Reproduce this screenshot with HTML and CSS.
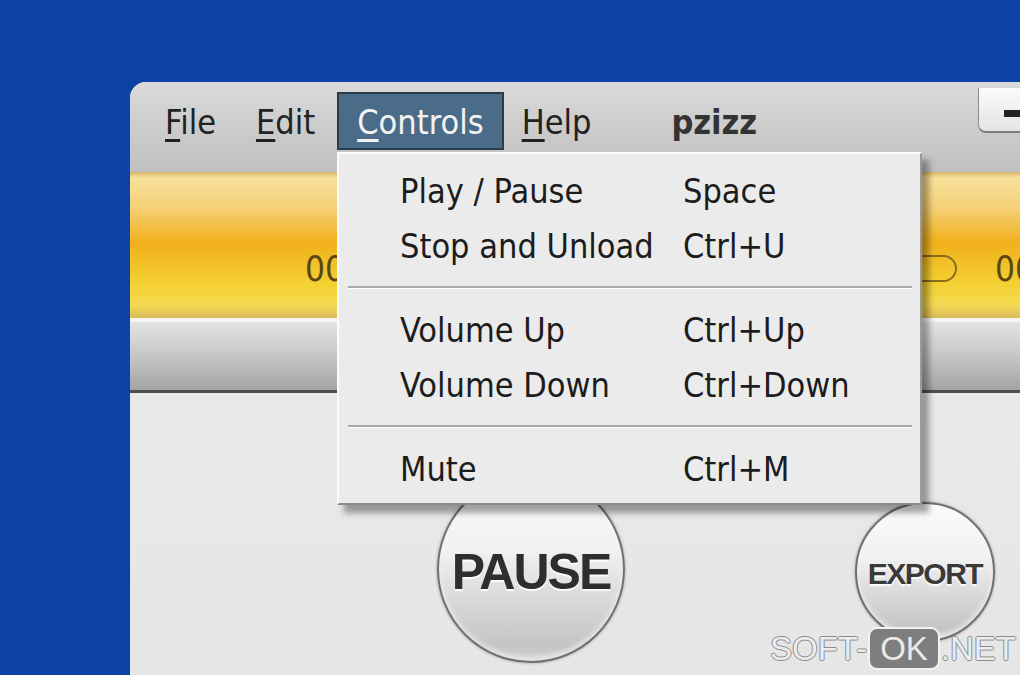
FILE: index.html
```html
<!DOCTYPE html>
<html>
<head>
<meta charset="utf-8">
<title>pzizz</title>
<link rel="stylesheet" href="styles.css">
</head>
<body>
<div class="desktop">
  <div class="window">
    <div class="menubar">
      <span class="mi"><u>F</u>ile</span>
      <span class="mi"><u>E</u>dit</span>
      <span class="mi active"><u>C</u>ontrols</span>
      <span class="mi"><u>H</u>elp</span>
      <span class="title">pzizz</span>
      <div class="minbtn"><span class="dash"></span></div>
    </div>
    <div class="timebar">
      <span class="t1">00:00:00</span>
      <span class="pill"></span>
      <span class="t2">00:00:00</span>
    </div>
    <div class="graybar"></div>
    <div class="content">
      <div class="btn pause">PAUSE</div>
      <div class="btn export">EXPORT</div>
    </div>

    <div class="dropdown">
      <div class="row"><span class="lbl">Play / Pause</span><span class="key">Space</span></div>
      <div class="row"><span class="lbl">Stop and Unload</span><span class="key">Ctrl+U</span></div>
      <div class="sep"></div>
      <div class="row"><span class="lbl">Volume Up</span><span class="key">Ctrl+Up</span></div>
      <div class="row"><span class="lbl">Volume Down</span><span class="key">Ctrl+Down</span></div>
      <div class="sep"></div>
      <div class="row"><span class="lbl">Mute</span><span class="key">Ctrl+M</span></div>
    </div>
  </div>
</div>
<div class="wm"><span>SOFT-</span><span class="ok">OK</span><span>.NET</span></div>
</body>
</html>
```
FILE: styles.css
```css
html, body {
  margin: 0;
  padding: 0;
}
body {
  position: relative;
  width: 1020px;
  height: 675px;
  overflow: hidden;
  background: #0b42a3;
  font-family: "DejaVu Sans Condensed", "DejaVu Sans", sans-serif;
  font-stretch: condensed;
}
.desktop {
  padding: 82px 0 0 130px;
  height: 593px;
}
.window {
  position: relative;
  width: 890px;
  height: 593px;
  border-top-left-radius: 16px;
  overflow: hidden;
  background: linear-gradient(#ebebeb, #e6e6e6);
  display: flex;
  flex-direction: column;
}

/* menu bar */
.menubar {
  height: 90px;
  flex-shrink: 0;
  box-sizing: border-box;
  display: flex;
  align-items: flex-start;
  padding: 10px 0 0 15px;
  background: linear-gradient(#dadada, #cbcbcb 55%, #c0c0c0);
  font-size: 34px;
  color: #222;
}
.mi {
  height: 52px;
  line-height: 52px;
  padding: 2px 18px 0;
  border: 2px solid transparent;
  white-space: nowrap;
}
.mi u {
  text-decoration-thickness: 3px;
  text-underline-offset: 5px;
}
.mi.active {
  margin-left: 2px;
  margin-right: -2px;
  background: #4a6c88;
  border-color: #2a3b4b;
  color: #f3f3f3;
}
.title {
  font-weight: bold;
  margin-left: 60px;
  height: 52px;
  line-height: 52px;
  padding-top: 4px;
  color: #333;
  font-stretch: normal;
}
.minbtn {
  margin-left: auto;
  margin-top: -4px;
  width: 42px;
  height: 45px;
  box-sizing: border-box;
  background: linear-gradient(#fbfbfb, #e4e4e4);
  border-left: 1px solid #8c8c8c;
  border-bottom: 2px solid #7c7c7c;
  border-bottom-left-radius: 8px;
  padding: 22px 0 0 25px;
  flex-shrink: 0;
}
.dash {
  display: block;
  width: 30px;
  height: 7px;
  background: #222;
}

/* yellow time bar */
.timebar {
  height: 146px;
  flex-shrink: 0;
  box-sizing: border-box;
  display: flex;
  align-items: flex-start;
  padding: 77px 0 0 175px;
  background: linear-gradient(to bottom,
    #d6b468 0, #f8e19b 4%, #f5d179 24%, #f0b01c 48%,
    #f2c228 64%, #f4d234 78%, #f3da52 91%, #e3c65c 97%, #d9bb58 100%);
  font-size: 35px;
  line-height: 40px;
  color: #5a4710;
  white-space: nowrap;
}
.t1 {
  width: 592px;
  flex-shrink: 0;
}
.pill {
  width: 60px;
  height: 27px;
  margin-top: 6px;
  margin-right: 38px;
  box-sizing: border-box;
  border: 2px solid #8b6b1e;
  border-radius: 14px;
  flex-shrink: 0;
}
.t2 {
  flex-shrink: 0;
}

/* gray bar */
.graybar {
  height: 75px;
  flex-shrink: 0;
  box-sizing: border-box;
  border-top: 4px solid #f4f4f4;
  border-bottom: 3px solid #4e4e4e;
  background: linear-gradient(#e4e4e4, #c6c6c6 50%, #a4a4a4);
}

/* buttons area */
.content {
  flex: 1;
  display: flex;
  align-items: flex-start;
  padding: 82px 0 0 307px;
}
.btn {
  flex-shrink: 0;
  box-sizing: border-box;
  border-radius: 50%;
  display: flex;
  align-items: center;
  justify-content: center;
  border: 2px solid #707070;
  background: linear-gradient(#fbfbfb 0%, #f1f1f1 40%, #dddddd 62%, #c4c4c4 92%, #d2d2d2 100%);
  box-shadow: 0 0 3px rgba(0,0,0,.35), inset 0 -4px 5px rgba(255,255,255,.5);
  font-family: "Liberation Sans", Arial, sans-serif;
  font-weight: bold;
  color: #2e2e2e;
  text-shadow: 0 2px 1px rgba(255,255,255,.9);
}
.pause {
  width: 188px;
  height: 188px;
  padding-top: 6px;
  font-size: 50px;
  letter-spacing: -2px;
}
.export {
  width: 140px;
  height: 140px;
  margin-left: 230px;
  margin-top: 27px;
  padding-top: 4px;
  font-size: 30px;
  letter-spacing: -1.5px;
  color: #3a3a3a;
}

/* dropdown menu */
.dropdown {
  position: absolute;
  left: 207px;
  top: 70px;
  width: 585px;
  height: 353px;
  box-sizing: border-box;
  background: #ebebeb;
  border: 2px solid;
  border-color: #fbfbfb #9a9a9a #8a8a8a #fbfbfb;
  box-shadow: 7px 8px 6px rgba(0,0,0,.35);
  padding: 10px 0 6px;
  font-size: 34px;
  color: #1c1c1c;
  white-space: nowrap;
}
.row {
  display: flex;
  height: 55px;
  line-height: 55px;
  padding-left: 61px;
}
.lbl {
  width: 283px;
  flex-shrink: 0;
}
.sep {
  height: 29px;
  box-sizing: border-box;
  padding: 12px 8px 0 9px;
}
.sep::before {
  content: "";
  display: block;
  height: 2px;
  background: #a9a9a9;
  border-bottom: 1px solid #ffffff;
}

/* watermark */
.wm {
  position: absolute;
  left: 770px;
  top: 627px;
  display: flex;
  align-items: center;
  font-family: "Liberation Sans", Arial, sans-serif;
  font-size: 33px;
  color: #ececec;
  text-shadow: 1px 0 0 #8c8c8c, -1px 0 0 #8c8c8c, 0 1px 0 #8c8c8c, 0 -1px 0 #8c8c8c;
}
.wm .ok {
  height: 39px;
  line-height: 39px;
  padding: 0 10px;
  margin: 0 1px;
  background: #7e7e7e;
  border: 2px solid #f2f2f2;
  border-radius: 9px;
  text-shadow: none;
  color: #eaeaea;
}
```
